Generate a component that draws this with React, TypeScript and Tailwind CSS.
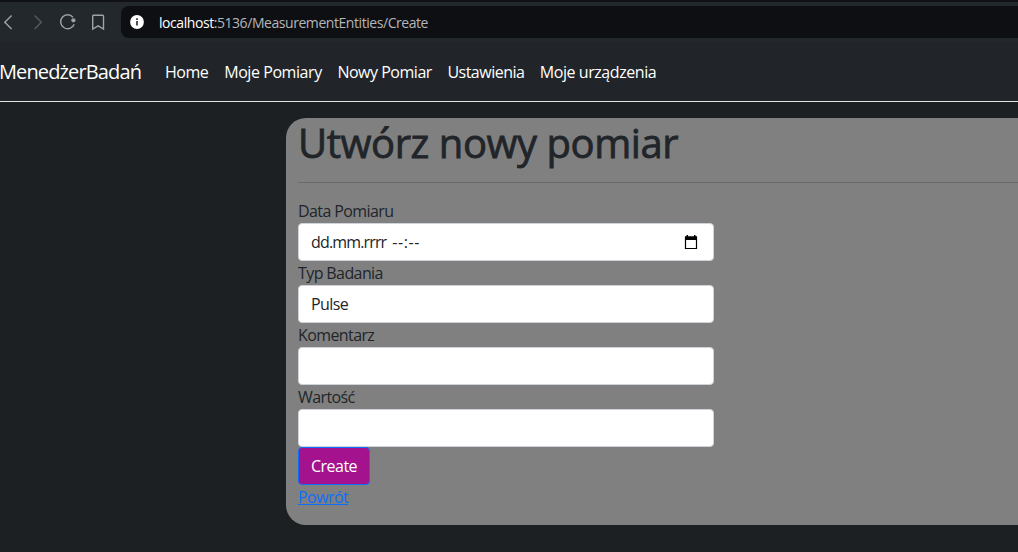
import type { ReactNode } from 'react';

const navItems = [
  { label: 'Home', box: 'w-[59.2px]', spacing: 'tracking-[-0.5px]' },
  { label: 'Moje Pomiary', box: 'w-[113.2px]', spacing: 'tracking-[-0.43px]' },
  { label: 'Nowy Pomiar', box: 'w-[110px]', spacing: 'tracking-[-0.48px]' },
  { label: 'Ustawienia', box: 'w-[92.4px]', spacing: 'tracking-[-0.5px]' },
  { label: 'Moje urządzenia', box: 'w-[134px]', spacing: 'tracking-[-0.43px]' },
];

function BrowserBar() {
  return (
    <div className="flex h-[42px] border-t-2 border-[#101115] bg-[#22282b] pt-1">
      <div className="w-[121px] shrink-0 text-[#9aa5a8]">
        <svg width="121" height="32" viewBox="0 0 121 32" fill="none" stroke="currentColor" strokeWidth="1.4">
          <path d="M11.6 9.5L4.8 16.2l6.8 6.7" />
          <path d="M34.6 9.5l6.8 6.7-6.8 6.7" stroke="#555c60" />
          <path d="M73 11.2a7 7 0 1 0 1.2 7" />
          <circle cx="73.4" cy="14.3" r="2.1" fill="currentColor" stroke="none" />
          <path d="M93.3 9.2h9.4q.8 0 .8.8v13l-5.4-3.2-5.4 3.2v-13q0-.8.6-.8z" />
        </svg>
      </div>
      <div className="flex h-8 flex-1 items-center rounded-l-lg bg-[#0e0f13] pl-[9px]">
        <svg width="14" height="14" viewBox="0 0 14 14">
          <circle cx="7" cy="7" r="6.9" fill="#fff" />
          <path d="M7 6v4.6M7 3.2v1.7" stroke="#45464a" strokeWidth="1.9" />
        </svg>
        <span className="ml-[15px] whitespace-nowrap text-[14px] tracking-[-0.44px] text-[#b4b6ba]">
          <span className="text-white">localhost</span>:5136/MeasurementEntities/Create
        </span>
      </div>
    </div>
  );
}

function Field({ label, children }: { label: string; children?: ReactNode }) {
  return (
    <label className="block">
      <span className="block h-6 leading-6 tracking-[-0.6px]">{label}</span>
      <div className="flex h-[38px] w-[416px] items-center rounded border border-[#ced4da] bg-white px-3 tracking-[-0.6px]">
        {children}
      </div>
    </label>
  );
}

export default function App() {
  return (
    <div className="h-[552px] w-full overflow-hidden bg-[#1c2022] font-['Open_Sans','Noto_Sans',sans-serif] text-[16px] text-[#212529]">
      <BrowserBar />
      <nav className="flex h-[60px] items-center border-b border-[#e4e6e6] bg-[#212529] pt-px text-white">
        <a className="-ml-[1px] w-[158px] whitespace-nowrap text-[20px] tracking-[-0.87px]">MenedżerBadań</a>
        {navItems.map((item) => (
          <a key={item.label} className={`shrink-0 whitespace-nowrap px-2 ${item.box} ${item.spacing}`}>
            {item.label}
          </a>
        ))}
      </nav>
      <main className="mt-4 ml-[286px] h-[407px] rounded-l-[20px] bg-[#808080] pl-3">
        <h1 className="h-12 whitespace-nowrap pt-px text-[40px] leading-[48px] tracking-[-0.45px] [-webkit-text-stroke:0.8px_#212529]">
          Utwórz nowy pomiar
        </h1>
        <hr className="my-4 border-t border-[#686969]" />
        <Field label="Data Pomiaru">
          <span className="whitespace-pre">
            <span className="tracking-[-0.85px]">dd.mm.rrrr</span>
            <span className="ml-[6px] tracking-[0.6px]">--:--</span>
          </span>
          <svg className="mr-[3px] ml-auto" width="14" height="15" viewBox="0 0 14 15">
            <path d="M1.5 2h11v11.5h-11z" fill="none" stroke="#000" strokeWidth="1.2" />
            <path d="M1 1.5h12V5H1zM2.5 0h1.5v2H2.5zM10 0h1.5v2H10z" fill="#000" />
          </svg>
        </Field>
        <Field label="Typ Badania">Pulse</Field>
        <Field label="Komentarz" />
        <Field label="Wartość" />
        <button className="block h-[38px] w-[72px] rounded border border-[#0d6efd] bg-[#a5128d] text-center tracking-[-0.5px] text-white">
          Create
        </button>
        <a className="block h-6 w-fit leading-6 tracking-[-0.55px] text-[#0d6efd] underline">Powrót</a>
      </main>
    </div>
  );
}
